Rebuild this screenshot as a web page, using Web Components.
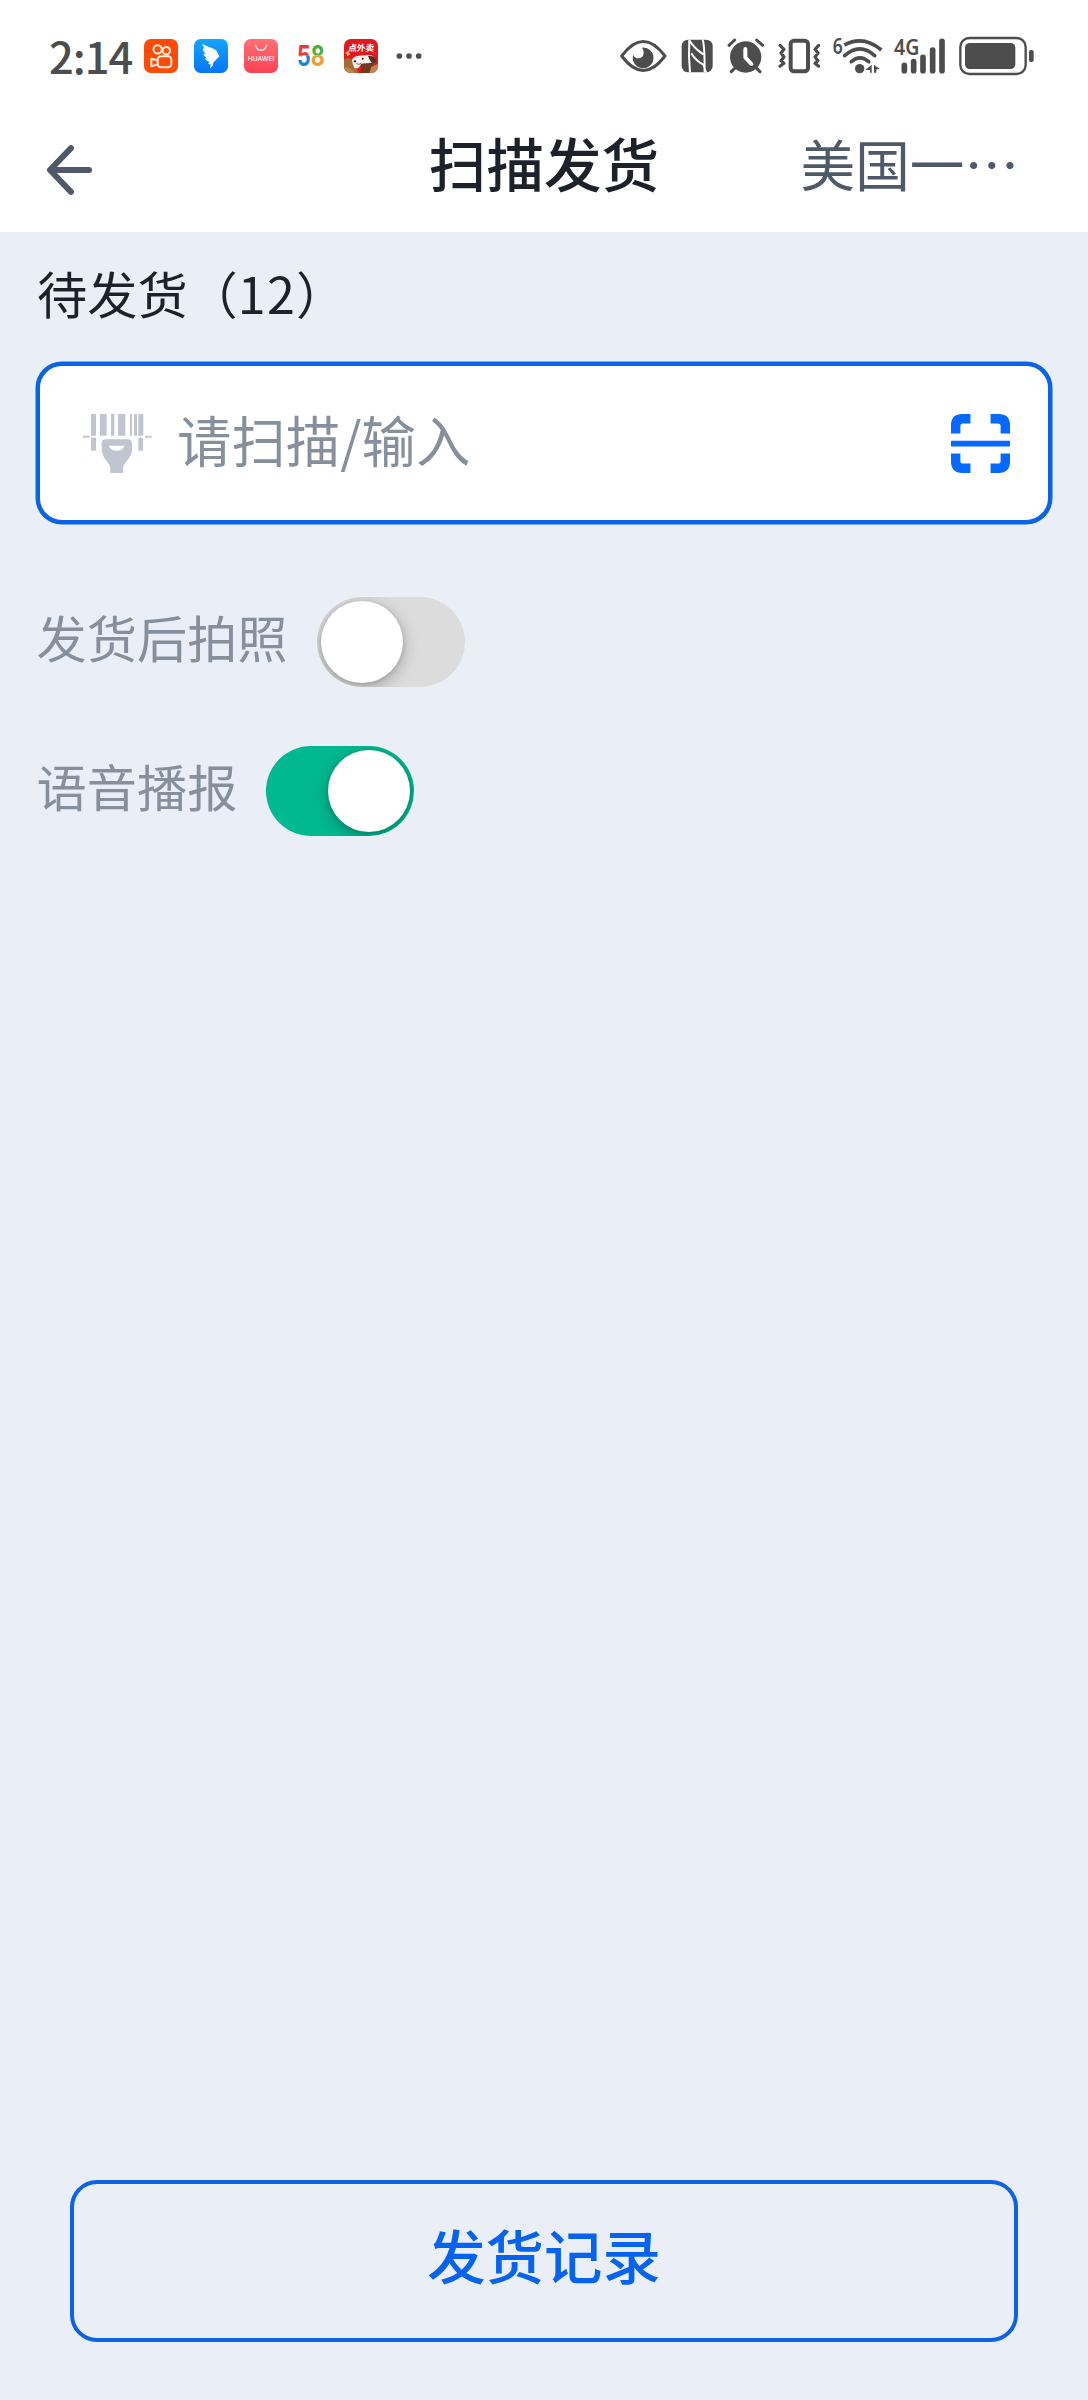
<!DOCTYPE html>
<html lang="zh-CN">
<head>
<meta charset="utf-8">
<title>扫描发货</title>
<style>
  html, body { margin: 0; padding: 0; }
  body {
    width: 1088px; height: 2400px; overflow: hidden; background: #eaeef6;
    font-family: "Noto Sans CJK SC", "Noto Sans", sans-serif;
  }
</style>
</head>
<body>
<ship-page></ship-page>

<template id="t-status">
  <style>
    :host { display: flex; height: 92px; padding-top: 20px; box-sizing: content-box; background: #fff; justify-content: space-between; color: #4d4d4d; }
    .group { display: flex; height: 75px; }
    .left { padding-left: 49px; }
    .right { padding-right: 53px; }
    .time { font-size: 43.5px; font-weight: 500; line-height: 71px; width: 85px; letter-spacing: -1px; margin-right: 10px; white-space: nowrap; }
    svg { display: block; height: 75px; flex: none; }
    .apps { display: flex; gap: 16px; }
  </style>
  <div class="group left">
    <div class="time">2:14</div>
    <div class="apps">
      <svg width="34" viewBox="342 0 102 225">
        <rect x="342" y="57" width="102" height="102" rx="20" fill="#ff4a08"/>
        <g fill="none" stroke="#fff0df" stroke-width="6">
          <circle cx="383" cy="88" r="12.5"/><circle cx="409" cy="92" r="11"/>
          <rect x="383" y="109" width="41" height="33" rx="10"/>
          <path d="M383 121l-19-5v23l19-6" stroke-linejoin="round"/>
        </g>
      </svg>
      <svg width="34" viewBox="492 0 102 225">
        <defs><linearGradient id="bird" x1="0" y1="0" x2="0" y2="1"><stop offset="0" stop-color="#14a5fb"/><stop offset="1" stop-color="#0675fb"/></linearGradient></defs>
        <rect x="492" y="57" width="102" height="102" rx="20" fill="url(#bird)"/>
        <path d="M517 71C532 82 553 83 560 93L568 109L551 127L548 133L550 134L540 146L542 133L534 132L538 127Q526 122 524 115L532 116Q522 109 520 101L528 103Q516 91 519 83L525 86Q517 79 517 71Z" fill="#fff"/>
      </svg>
      <svg width="34" viewBox="42 0 102 225">
        <defs><linearGradient id="hw" x1="0" y1="0" x2="0" y2="1"><stop offset="0" stop-color="#ff6f72"/><stop offset="1" stop-color="#fb4257"/></linearGradient></defs>
        <rect x="42" y="57" width="102" height="102" rx="20" fill="url(#hw)"/>
        <path d="M77 75a16 16 0 0 0 32 0" fill="none" stroke="#fff" stroke-width="3.4" stroke-linecap="round"/>
        <text x="93" y="123" text-anchor="middle" font-family="Inter, sans-serif" font-size="18" font-weight="500" fill="#fff" textLength="80" lengthAdjust="spacingAndGlyphs">HUAWEI</text>
      </svg>
      <svg width="34" viewBox="192 0 102 225">
        <defs>
          <pattern id="quad" patternUnits="userSpaceOnUse" x="192" y="0" width="102" height="225">
            <rect width="48" height="106" fill="#e8393c"/><rect y="106" width="48" height="119" fill="#1787d1"/>
            <rect x="48" width="54" height="106" fill="#4cae36"/><rect x="48" y="106" width="54" height="119" fill="#f29a2e"/>
          </pattern>
        </defs>
        <text x="201" y="139" font-family="Inter, sans-serif" font-size="86" font-weight="700" fill="url(#quad)" textLength="83" lengthAdjust="spacingAndGlyphs">58</text>
      </svg>
      <svg width="34" viewBox="342 0 102 225">
        <defs><clipPath id="jd"><rect x="342" y="57" width="102" height="102" rx="20"/></clipPath></defs>
        <g clip-path="url(#jd)">
          <rect x="342" y="57" width="102" height="102" fill="#e3181c"/>
          <path d="M342 119q12-12 30 4l12 36h-42z" fill="#a86a35"/>
          <path d="M345 97l10-4 6 10-8 6z" fill="#e6a34e"/>
          <path d="M366 120q4-12 20-13l28-2q14-1 20 10l2 14-40 2-12 14h-10q-8-14-8-25z" fill="#fbf3ee"/>
          <path d="M414 108q20-4 26 18l-12 6q-10-10-14-24z" fill="#573026"/>
          <path d="M392 132l38-4-4 31h-32z" fill="#71391e"/>
          <path d="M342 142q20-2 32 17h-32zM424 140l20-8v27h-26z" fill="#bd8750"/>
          <circle cx="398" cy="116" r="3" fill="#311"/><ellipse cx="375" cy="124" rx="4" ry="3" fill="#311"/>
          <path d="M379 131q9 5 15-2" fill="none" stroke="#511" stroke-width="2"/>
        </g>
        <text x="354" y="94" transform="skewX(-5) translate(8 0)" font-family="Noto Sans CJK SC, sans-serif" font-size="26" font-weight="700" fill="#fff" textLength="78">点外卖</text>
      </svg>
      <svg width="30" viewBox="492 0 90 225"><g fill="#4d4d4d"><circle cx="508" cy="108" r="8.5"/><circle cx="537" cy="108" r="8.5"/><circle cx="566" cy="108" r="8.5"/></g></svg>
    </div>
  </div>
  <div class="group right">
    <svg width="230" viewBox="60 0 690 225" style="margin-right:-30px" overflow="visible">
      <g fill="#4d4d4d">
        <path d="M65 108Q130 21 195 108Q130 195 65 108Z" fill="none" stroke="#4d4d4d" stroke-width="9" stroke-linejoin="round"/>
        <path d="M126 83A31 31 0 1 1 100 104Q104 116 116 115Q130 113 131 99Q132 89 126 83Z"/>
        <rect x="245" y="59" width="93" height="98" rx="19"/>
        <path d="M268 59Q265 108 270 157M269 62Q282 84 310 103M308 59Q314 76 314 157M274 100Q288 124 314 136M310 134L318 157" fill="none" stroke="#fff" stroke-width="6"/>
        <circle cx="437" cy="111" r="47"/>
        <path d="M387 76l17-16M470 60l18 16M404 145l-10 10M470 145l10 10" stroke="#4d4d4d" stroke-width="9" stroke-linecap="round"/>
        <path d="M436 87v25l18 20" fill="none" stroke="#fff" stroke-width="12" stroke-linecap="round" stroke-linejoin="round"/>
        <rect x="572" y="62" width="52" height="92" rx="10" fill="none" stroke="#4d4d4d" stroke-width="12"/>
        <path d="M540 76l12 12-9 11 9 12-9 11 9 8-12 9M656 76l-11 12 9 11-9 12 9 11-9 8 11 9" fill="none" stroke="#4d4d4d" stroke-width="9.5" stroke-linecap="round" stroke-linejoin="round"/>
      </g>
    </svg>
    <svg width="215" viewBox="0 0 645 225">
      <g fill="#4d4d4d" font-family="Noto Sans, sans-serif" font-weight="700">
        <text x="38" y="102" font-size="66" font-weight="600" textLength="30" lengthAdjust="spacingAndGlyphs">6</text>
        <g fill="none" stroke="#4d4d4d" stroke-width="11">
          <path d="M73 75Q130 44 184 90"/>
          <path d="M74 107Q120 66 164 107" stroke-linecap="round"/>
          <path d="M94 125Q120 102 146 125" stroke-linecap="round"/>
        </g>
        <circle cx="119" cy="146" r="14"/>
        <path d="M155 134v24h-5v-8h-14zM162 134l18 14h-11v10h-7z"/>
        <text x="222" y="106" font-size="64" font-weight="600" textLength="76" lengthAdjust="spacingAndGlyphs">4G</text>
        <path d="M253 136v16M281 125v27M309 112v40M338 90v62M366 64v88" stroke="#4d4d4d" stroke-width="17" stroke-linecap="round"/>
        <rect x="421" y="54" width="196" height="108" rx="27" fill="none" stroke="#4d4d4d" stroke-width="7"/>
        <rect x="435" y="69" width="151" height="78" rx="14"/>
        <rect x="627" y="90" width="14" height="36" rx="6"/>
      </g>
    </svg>
  </div>
</template>

<template id="t-nav">
  <style>
    :host { display: grid; grid-template-columns: 1fr auto 1fr; height: 120px; background: #fff; box-sizing: border-box; padding: 21px 69px 0 46px; }
    svg { display: block; margin-top: 12px; }
    .title { font-size: 57.6px; line-height: 58px; font-weight: 500; color: #1d2129; padding-left: 23px; }
    .side { font-size: 54.6px; line-height: 60px; color: #4e5969; text-align: right; white-space: nowrap; }
  </style>
  <svg width="47" height="50" viewBox="0 0 47 50"><path d="M25 3.2L4 25L25 46.8M4.500 25H43" fill="none" stroke="#4e5969" stroke-width="6" stroke-linecap="round" stroke-linejoin="round"/></svg>
  <div class="title"><slot></slot></div>
  <div class="side"><slot name="side"></slot></div>
</template>

<template id="t-input">
  <style>
    :host { display: flex; align-items: center; box-sizing: border-box; height: 162px; border: 4px solid #0b63e5; box-shadow: 0 0 0 .5px #0b63e5; border-radius: 26px; background: #fff; padding: 0 38px 0 43px; }
    svg { display: block; flex: none; }
    .ph { flex: 1; font-size: 54.4px; line-height: 60px; color: #86909c; margin: -8px 0 0 25px; white-space: nowrap; }
  </style>
  <svg width="69" height="59" viewBox="189 190 207 177" fill="#c0c5cf">
    <path d="M213 190h15v65h-15zM240 190h20v65h-20zM273 190h10v65h-10zM294 190h22v65h-22zM330 190h6v65h-6zM342 190h9v65h-9zM355 190h15v65h-15zM189 255h19v6h-19zM375 255h20v6h-20zM213 261h15v39h-15zM355 261h14v39h-14z"/>
    <path fill-rule="evenodd" d="M258 266h65q13 0 13 13v18q0 14-15 33-12 14-12 22v15h-38v-15q0-8-12-22-14-19-14-33v-18q0-13 13-13zM266 285q6 15 24 15t24-15z"/>
  </svg>
  <div class="ph"><slot></slot></div>
  <svg width="59" height="59" viewBox="151 190 176 176" fill="#0568ff">
    <path d="M151 248v-24q0-34 34-34h24v28h-22q-8 0-8 8v22zM269 190h24q34 0 34 34v24h-28v-22q0-8-8-8h-22zM151 308v24q0 34 34 34h24v-28h-22q-8 0-8-8v-22zM269 366h24q34 0 34-34v-24h-28v22q0 8-8 8h-22zM151 270h176v17h-176z"/>
  </svg>
</template>

<template id="t-switch">
  <style>
    :host { display: flex; height: 90px; gap: 29px; }
    .label { font-size: 50.2px; line-height: 78px; color: #86909c; white-space: nowrap; }
    .track { width: 148px; height: 90px; border-radius: 45px; box-sizing: border-box; padding: 4px; display: flex; background: #dcdcdc; overflow: hidden; }
    .knob { width: 82px; height: 82px; border-radius: 50%; background: #fff; box-shadow: 0 4px 16px rgba(0,0,0,.28), 0 1px 4px rgba(0,0,0,.12); }
    :host([on]) .track { background: #00b990; justify-content: flex-end; }
  </style>
  <div class="label"><slot></slot></div>
  <div class="track"><div class="knob"></div></div>
</template>

<template id="t-button">
  <style>
    :host { display: flex; justify-content: center; box-sizing: border-box; height: 162px; border: 4px solid #0b63e5; border-radius: 27px; padding-top: 40px; font-size: 58.4px; line-height: 60px; font-weight: 500; color: #0563f0; }
  </style>
  <slot></slot>
</template>

<template id="t-page">
  <style>
    :host { display: flex; flex-direction: column; width: 1088px; height: 2400px; background: #eaeef6; }
    main { flex: 1; display: flex; flex-direction: column; padding: 30px 36px 58px; }
    .count { font-size: 50.2px; line-height: 60px; color: #1d2129; margin: 0 0 40px 1px; white-space: nowrap; }
    .num { letter-spacing: 1.3px; }
    .switches { display: flex; flex-direction: column; gap: 59px; margin: 73px 0 0 .6px; }
    ship-button { margin: auto 34px 0; }
  </style>
  <phone-status></phone-status>
  <nav-bar>扫描发货<span slot="side">美国一…</span></nav-bar>
  <main>
    <div class="count">待发货（<span class="num">12</span>）</div>
    <scan-input>请扫描/输入</scan-input>
    <div class="switches">
      <toggle-row>发货后拍照</toggle-row>
      <toggle-row on>语音播报</toggle-row>
    </div>
    <ship-button>发货记录</ship-button>
  </main>
</template>

<script>
  const define = (name, id) => customElements.define(name, class extends HTMLElement {
    constructor() {
      super();
      this.attachShadow({ mode: 'open' }).append(document.getElementById(id).content.cloneNode(true));
    }
  });
  define('phone-status', 't-status');
  define('nav-bar', 't-nav');
  define('scan-input', 't-input');
  define('toggle-row', 't-switch');
  define('ship-button', 't-button');
  define('ship-page', 't-page');
</script>
</body>
</html>
